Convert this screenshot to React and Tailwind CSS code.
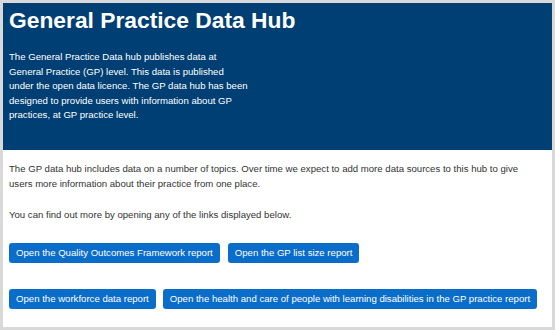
export default function App() {
  const row1 = [
    'Open the Quality Outcomes Framework report',
    'Open the GP list size report',
  ];
  const row2 = [
    'Open the workforce data report',
    'Open the health and care of people with learning disabilities in the GP practice report',
  ];

  return (
    <div className="h-[330px] w-[555px] bg-[#d9d9d9] p-[3px] font-['Liberation_Sans',Arial,sans-serif]">
      <div className="flex h-full flex-col bg-white">
        <header className="h-[147px] bg-[#003f73] px-[6px] pt-[4px] text-white">
          <h1 className="text-[22.8px] font-bold leading-[27px]">General Practice Data Hub</h1>
          <p className="mt-[16px] w-[240px] text-[9.6px] leading-[14.5px]">
            The General Practice Data hub publishes data at General Practice (GP) level. This data is published
            under the open data licence. The GP data hub has been designed to provide users with information
            about GP practices, at GP practice level.
          </p>
        </header>

        <section className="px-[6px] pt-[11px] text-[9.6px] leading-[15px] text-[#333]">
          <p className="w-[515px]">
            The GP data hub includes data on a number of topics. Over time we expect to add more data sources to this
            hub to give users more information about their practice from one place.
          </p>
          <p className="mt-[16px]">You can find out more by opening any of the links displayed below.</p>

          <div className="mt-[21px] flex gap-[8px]">
            {row1.map((t) => <LinkButton key={t} label={t} />)}
          </div>
          <div className="mt-[26px] flex gap-[7px]">
            {row2.map((t) => <LinkButton key={t} label={t} />)}
          </div>
        </section>
      </div>
    </div>
  );
}

function LinkButton({ label }) {
  return (
    <a href="#" className="h-[20px] whitespace-nowrap rounded-[3px] bg-[#0b6dca] px-[7px] text-[9.6px] leading-[20px] text-white">
      {label}
    </a>
  );
}
